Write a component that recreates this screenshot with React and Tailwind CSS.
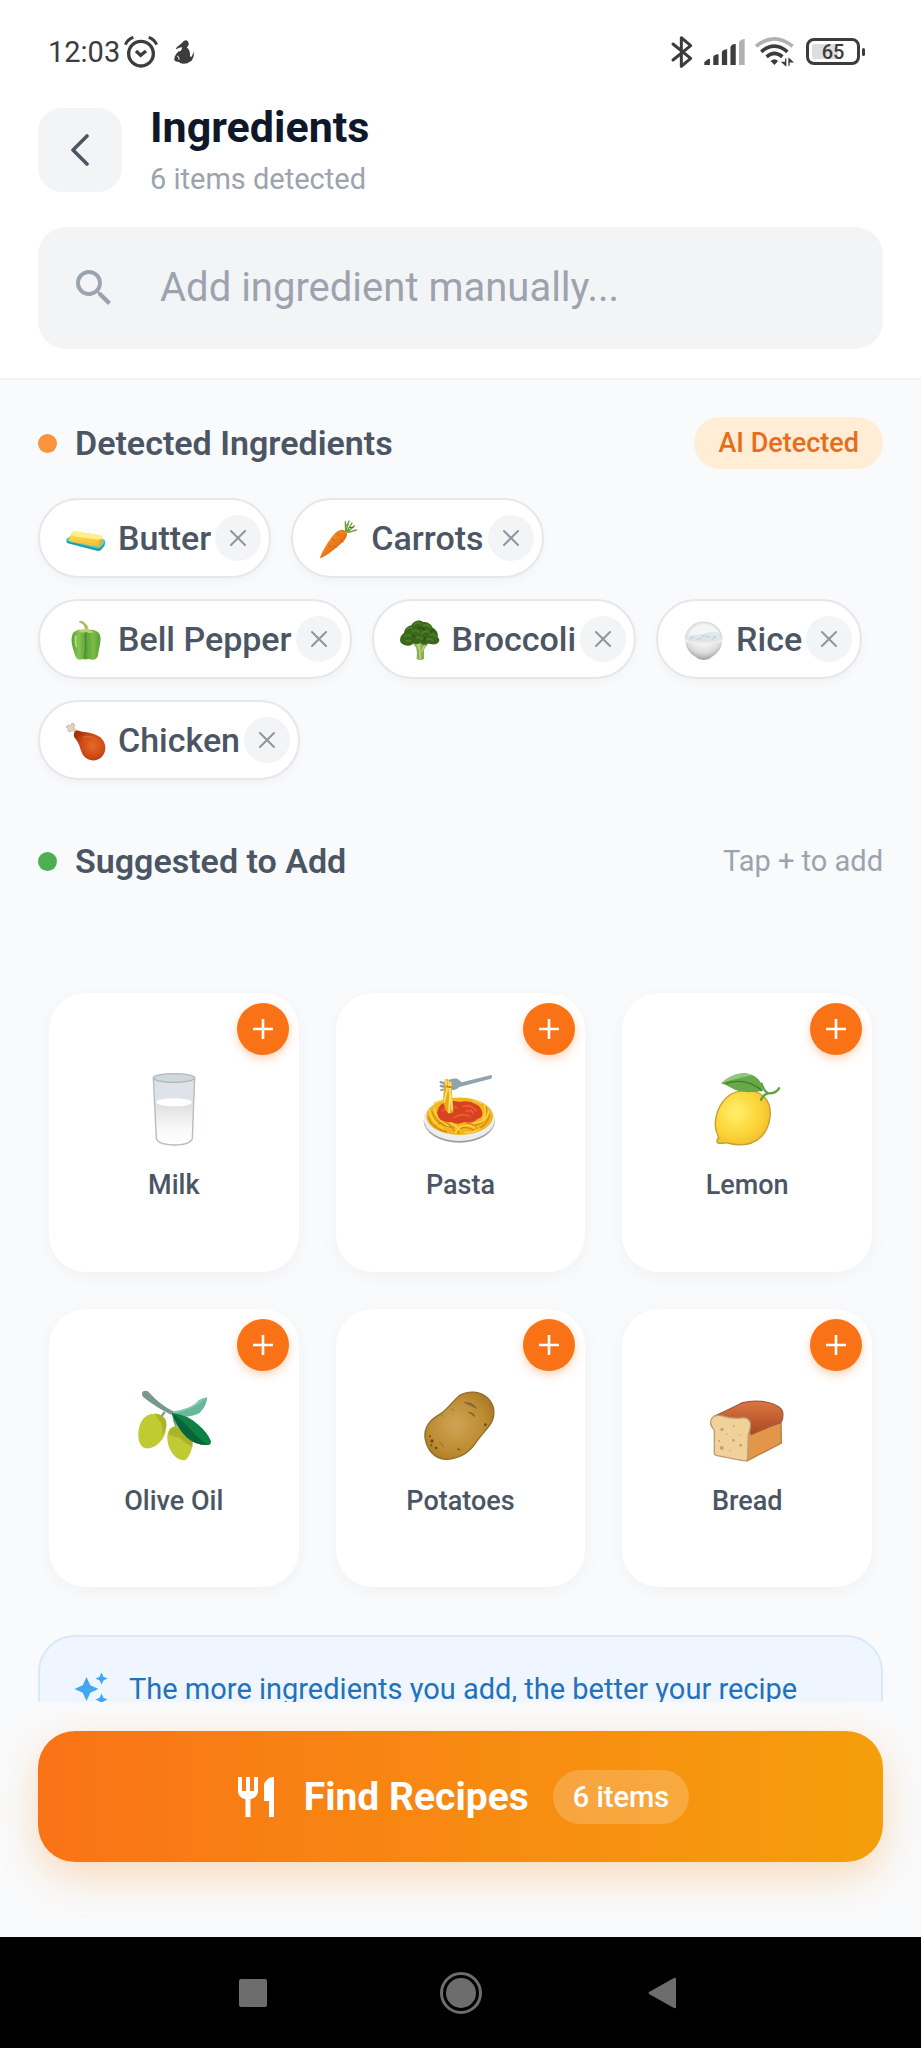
import { useState } from "react";
import { MdSearch, MdAutoAwesome, MdRestaurant } from "react-icons/md";

function Butter() {
  return (
    <svg viewBox="0 0 120 120" className="size-10 shrink-0 overflow-visible" aria-hidden="true">
      <defs>
        <linearGradient id="butterSide" x1="0" y1="0" x2="0" y2="1">
          <stop offset="0" stopColor="#ffe45c" />
          <stop offset="1" stopColor="#f6b92c" />
        </linearGradient>
      </defs>
      <path d="M2 63Q-1 72 5 76L92 98Q99 100 105 96L115 84Q120 76 117 67L100 62L12 56Z" fill="#1f9fa8" />
      <path d="M2 62Q-1 68 5 70L94 91Q100 92 105 88L116 74Q119 67 114 64L20 50Z" fill="#55cfd2" />
      <path d="M9 64L19 43Q21 39 27 40L102 52Q109 54 109 60L108 74Q106 82 97 86L16 71Q8 69 9 64Z" fill="url(#butterSide)" />
      <path d="M19 43Q21 39 27 40L102 52Q109 54 108 60Q106 66 98 65L24 55Q17 53 19 43Z" fill="#fff08a" />
      <path d="M98 65Q106 66 109 60L108 74Q106 82 97 86Z" fill="#eeb02c" />
    </svg>
  );
}

function Carrot() {
  return (
    <svg viewBox="0 0 120 120" className="size-10 shrink-0 overflow-visible" aria-hidden="true">
      <defs>
        <linearGradient id="carrotBody" x1="0" y1="0" x2="1" y2="1">
          <stop offset="0.2" stopColor="#f79329" />
          <stop offset="0.8" stopColor="#e2600f" />
        </linearGradient>
      </defs>
      <g fill="none" stroke="#689f38" strokeWidth="4" strokeLinecap="round" strokeLinejoin="round">
        <path d="M80 40L79 11M81 39L90 9M84 40L99 15M86 42L106 23M88 43L112 36" />
        <path d="M80 24L86 17M92 28L103 29" stroke="#33791d" strokeWidth="3" />
      </g>
      <path d="M3 121C5 108 32 60 50 44C60 33 75 32 82 41C89 51 79 66 64 79C43 97 14 120 3 121Z" fill="url(#carrotBody)" />
      <path d="M54 47L62 54M67 69L73 72M40 63L47 68M45 84L52 88M29 83L35 87" fill="none" stroke="#cf5c12" strokeWidth="3" strokeLinecap="round" />
    </svg>
  );
}

function Pepper() {
  return (
    <svg viewBox="0 0 120 120" className="size-10 shrink-0 overflow-visible" aria-hidden="true">
      <defs>
        <linearGradient id="pepperBody" x1="0" y1="0" x2="1" y2="0">
          <stop offset="0" stopColor="#5aa02c" />
          <stop offset="0.25" stopColor="#86c552" />
          <stop offset="0.5" stopColor="#5aa338" />
          <stop offset="0.75" stopColor="#7cbc48" />
          <stop offset="1" stopColor="#579d30" />
        </linearGradient>
      </defs>
      <path d="M60 36C72 29 94 32 101 46C107 60 101 80 98 96C97 111 93 122 82 122C75 123 70 120 65 120C60 123 53 120 49 121C34 126 29 115 25 101C20 84 13 66 19 47C24 32 46 28 60 36Z" fill="url(#pepperBody)" />
      <path d="M60 41C53 58 64 77 57 102L56 119" fill="none" stroke="#3e8527" strokeWidth="3" />
      <path d="M30 52C26 61 29 72 31 82" fill="none" stroke="#b9df86" strokeWidth="5" strokeLinecap="round" />
      <path d="M38 36Q52 29 56 31Q57 17 42 12Q37 10 40 6Q55 5 65 20L69 33Q80 35 83 40Q70 45 61 38Q48 45 38 36Z" fill="#c2cc72" />
      <path d="M43 7Q57 10 61 28" fill="none" stroke="#91a34a" strokeWidth="3" />
    </svg>
  );
}

function Broccoli() {
  return (
    <svg viewBox="0 0 120 120" className="size-10 shrink-0 overflow-visible" aria-hidden="true">
      <path d="M35 67L49 87Q52 100 50 120Q61 126 72 120L72 92Q76 84 92 66L61 59Z" fill="#8bad51" />
      <path d="M58 73L61 121M50 72L60 96M77 72L65 97" fill="none" stroke="#bad17c" strokeWidth="5" />
      <path d="M4 73C-4 64 2 48 12 42C14 28 25 20 34 19C40 4 60 0 70 9C84 7 95 18 98 26C110 32 116 45 113 54C124 63 115 76 103 76C94 78 86 71 80 75C72 82 64 73 59 71C53 79 43 72 39 74C30 83 15 82 4 73Z" fill="#3a671b" />
      <path d="M19 31Q28 23 35 27M43 15Q52 8 61 14M71 19Q85 15 90 25M14 53Q23 44 32 51M37 38Q49 29 56 39M65 44Q75 31 85 40M91 48Q104 43 107 54M46 57Q57 51 65 60M81 61Q88 56 98 64M18 66L31 65" fill="none" stroke="#4d7d26" strokeWidth="6" strokeLinecap="round" />
      <path d="M36 51Q43 48 45 57M67 28L73 32M76 55L72 66M54 27L64 27M99 34L94 38" fill="none" stroke="#2b5312" strokeWidth="5" strokeLinecap="round" />
    </svg>
  );
}

function Rice() {
  return (
    <svg viewBox="0 0 120 120" className="size-10 shrink-0 overflow-visible" aria-hidden="true">
      <defs>
        <linearGradient id="riceTop" x1="0" y1="0" x2="0" y2="1">
          <stop offset="0" stopColor="#e6e9ea" />
          <stop offset="1" stopColor="#dde5ea" />
        </linearGradient>
        <radialGradient id="riceBowl" cx="0.5" cy="0.35" r="0.62">
          <stop offset="0.4" stopColor="#f6f6f6" />
          <stop offset="0.8" stopColor="#dcdcdc" />
          <stop offset="1" stopColor="#b5b5b5" />
        </radialGradient>
      </defs>
      <path d="M34 111Q38 122 59 123Q80 122 84 111Z" fill="#a2a2a2" />
      <circle cx="59" cy="64" r="55" fill="url(#riceBowl)" />
      <path d="M4 62C4 31 28 9 59 9C90 9 114 31 114 62Q87 73 59 73Q30 73 4 62Z" fill="url(#riceTop)" stroke="#c6c8c9" strokeWidth="2" />
      <path d="M12 50Q28 17 59 15Q86 15 103 40Q77 36 60 45Q35 45 12 50Z" fill="#f4f5f5" />
      <path d="M19 58L29 54M40 61L51 58M67 52L77 55M85 60L95 53M55 51L61 49" stroke="#bdd0dd" strokeWidth="4" strokeLinecap="round" />
      <path d="M2 57Q9 68 59 70Q109 68 116 57Q117 66 110 70Q59 83 8 70Q1 66 2 57Z" fill="#eeeeee" />
    </svg>
  );
}

function Drumstick() {
  return (
    <svg viewBox="0 0 120 120" className="size-10 shrink-0 overflow-visible" aria-hidden="true">
      <defs>
        <radialGradient id="chickenMeat" cx="0.6" cy="0.5" r="0.6">
          <stop offset="0" stopColor="#e6692b" />
          <stop offset="0.6" stopColor="#cf4b16" />
          <stop offset="1" stopColor="#a73109" />
        </radialGradient>
      </defs>
      <path d="M33 40L18 30Q14 38 8 34Q4 31 7 25Q-1 24 3 18Q6 13 14 17Q16 8 22 10Q29 14 23 24L39 36Z" fill="#e2d4bd" stroke="#b2a38c" strokeWidth="2" />
      <path d="M24 41Q26 29 38 32C58 38 83 36 103 52C124 70 121 98 107 111C91 126 67 124 54 109C43 96 43 74 29 57Q21 48 24 41Z" fill="url(#chickenMeat)" />
      <path d="M53 51Q72 46 87 57" stroke="#e8783c" strokeWidth="4" fill="none" strokeLinecap="round" opacity="0.6" />
    </svg>
  );
}

function Milk() {
  return (
    <svg viewBox="0 0 216 216" className="size-18 overflow-visible" aria-hidden="true">
      <defs>
        <linearGradient id="milkFill" x1="0" y1="0" x2="0" y2="1">
          <stop offset="0" stopColor="#dedede" />
          <stop offset="0.6" stopColor="#f8f8f8" />
          <stop offset="1" stopColor="#ffffff" />
        </linearGradient>
      </defs>
      <path d="M46 14L55 197Q60 215 108 216Q156 215 163 197L170 14Z" fill="#dde3e8" />
      <path d="M51 91Q108 108 166 91L162 195Q155 213 108 214Q64 213 57 196Z" fill="url(#milkFill)" />
      <ellipse cx="108" cy="88" rx="54" ry="12" fill="#fff" />
      <path d="M46 14L55 197Q60 215 108 216Q156 215 163 197L170 14" fill="none" stroke="#b5bcc0" strokeWidth="4" />
      <ellipse cx="108" cy="15" rx="62" ry="13" fill="#cfd8df" stroke="#b0b7bb" strokeWidth="4" />
    </svg>
  );
}

function Pasta() {
  return (
    <svg viewBox="0 0 216 216" className="size-18 overflow-visible" aria-hidden="true">
      <ellipse cx="106" cy="143" rx="107" ry="66" fill="#9b9da0" />
      <ellipse cx="106" cy="138" rx="107" ry="66" fill="#eceded" />
      <ellipse cx="107" cy="130" rx="100" ry="56" fill="#f2b51d" />
      <g fill="none" stroke="#d48a0c" strokeWidth="4" strokeLinecap="round">
        <path d="M13 133Q25 168 68 177M24 116Q38 158 89 163M197 125Q188 164 144 174M186 103Q201 145 152 157M36 158Q67 133 91 174M103 181Q108 151 150 171M158 166Q130 138 119 164" />
      </g>
      <g fill="none" stroke="#fdd045" strokeWidth="5" strokeLinecap="round">
        <path d="M17 112Q20 145 56 166M30 102Q34 139 73 158M94 177Q118 144 153 164M194 112Q190 149 148 150M181 98Q187 125 174 143M80 151Q93 155 107 171M124 178Q144 181 167 166M31 90L59 81M148 82L172 90" />
      </g>
      <path d="M39 120Q43 97 59 91Q80 80 106 87Q136 80 153 93Q170 98 174 116Q180 131 161 138Q145 153 121 147Q101 157 82 147Q54 148 44 134Z" fill="#d8431f" />
      <path d="M55 113Q75 94 98 104M117 101Q138 92 156 113M91 133Q113 119 137 130M127 114Q145 109 147 121" fill="none" stroke="#ea5a33" strokeWidth="6" strokeLinecap="round" />
      <path d="M202 6Q207 11 201 17L106 42Q92 56 70 50L49 55L49 49L62 46L47 41L48 35L63 37L46 29L48 23L64 28Q79 14 100 17L113 28Z" fill="#90a4ae" />
      <path d="M62 20Q69 13 82 27L88 117Q75 126 66 113L57 86Z" fill="#eca719" />
      <path d="M65 22L69 50L61 87M73 25L78 66L75 119M80 29L79 57L85 110" fill="none" stroke="#ffe172" strokeWidth="5" strokeLinecap="round" />
      <path d="M65 40L83 43" stroke="#c88413" strokeWidth="5" />
    </svg>
  );
}

function Lemon() {
  return (
    <svg viewBox="0 0 216 216" className="size-18 overflow-visible" aria-hidden="true">
      <defs>
        <radialGradient id="lemonBody" cx="0.38" cy="0.4" r="0.65">
          <stop offset="0" stopColor="#fff06b" />
          <stop offset="0.65" stopColor="#fbd539" />
          <stop offset="1" stopColor="#f3bf2d" />
        </radialGradient>
      </defs>
      <path d="M20 186C6 159 14 117 34 88C62 48 124 41 158 70C190 101 180 162 149 193C122 219 81 218 50 210C35 208 20 217 18 206Q17 198 23 194Z" fill="url(#lemonBody)" stroke="#c89d2c" strokeWidth="4" />
      <path d="M150 80Q158 64 171 61Q195 62 204 46M152 32Q157 52 171 61" fill="none" stroke="#5ba044" strokeWidth="7" strokeLinecap="round" strokeLinejoin="round" />
      <path d="M30 31C62 4 94-7 125 7C147 17 154 34 155 54C108 61 83 58 58 43Q44 35 30 31Z" fill="#67a848" />
      <path d="M30 31C62 4 94-7 125 7C101 11 71 18 30 31Z" fill="#92c77d" />
      <path d="M44 31Q105 12 154 53" stroke="#3c7f31" strokeWidth="4" fill="none" />
    </svg>
  );
}

function Olive() {
  return (
    <svg viewBox="0 0 216 216" className="size-18 overflow-visible" aria-hidden="true">
      <path d="M106 67Q165 58 181 34Q194 26 207 25Q206 51 184 72Q149 90 106 77Z" fill="#82c9aa" />
      <path d="M106 74Q164 65 207 25Q206 51 184 72Q149 90 106 77Z" fill="#68b798" />
      <path d="M12 15Q11 5 24 5Q30 5 37 14Q66 47 108 68L99 77Q52 53 18 26Q11 21 12 15Z" fill="#78988b" />
      <path d="M80 69L66 88M106 76Q107 97 116 115" stroke="#789f8d" strokeWidth="7" fill="none" />
      <path d="M31 78C58 65 91 85 84 120C81 153 51 182 22 178C1 172-3 138 4 113C9 94 20 83 31 78Z" fill="#c0ca33" />
      <path d="M51 73Q81 78 85 99Q88 117 73 140Q78 104 60 91Z" fill="#a9b42b" />
      <path d="M98 118C116 103 150 113 161 143C170 171 155 202 142 213C120 218 98 193 91 168C85 144 88 127 98 118Z" fill="#c0ca33" />
      <path d="M107 113Q151 117 164 151L163 174Q141 164 124 146L92 137Q93 119 107 113Z" fill="#a9b42b" />
      <path d="M101 71Q152 78 181 107Q211 133 219 157Q219 168 211 168Q173 170 146 145Q117 116 101 71Z" fill="#0d8244" />
      <path d="M101 71Q140 99 164 128Q183 151 211 168Q173 170 146 145Q117 116 101 71Z" fill="#08653b" />
    </svg>
  );
}

function Potato() {
  return (
    <svg viewBox="0 0 216 216" className="size-18 overflow-visible" aria-hidden="true">
      <defs>
        <radialGradient id="potatoBody" cx="0.45" cy="0.48" r="0.6">
          <stop offset="0" stopColor="#cda555" />
          <stop offset="0.7" stopColor="#bd8b31" />
          <stop offset="1" stopColor="#a97822" />
        </radialGradient>
      </defs>
      <path d="M106 20C132 4 168 6 190 26C213 48 216 78 199 106C181 130 163 149 152 166C130 196 98 210 65 211C31 210 8 181 3 146C0 114 20 91 47 76C76 58 84 37 106 20Z" fill="url(#potatoBody)" stroke="#8e6c2d" strokeWidth="4" />
      <path d="M121 40Q145 39 158 58L139 49Z M133 70Q149 70 153 83L142 75Z" fill="#8a672b" stroke="#796141" strokeWidth="2" />
      <path d="M48 161L58 173M83 60L88 64M107 186L112 181M53 79L57 82" stroke="#81673c" strokeWidth="3" strokeLinecap="round" />
      <g fill="#6e4819">
        <circle cx="24" cy="156" r="5" />
        <circle cx="18" cy="142" r="3" />
        <circle cx="36" cy="177" r="4" />
        <circle cx="22" cy="169" r="3" />
        <circle cx="184" cy="107" r="4" />
        <circle cx="103" cy="181" r="3" />
      </g>
    </svg>
  );
}

function Bread() {
  return (
    <svg viewBox="0 0 216 216" className="size-18 overflow-visible" aria-hidden="true">
      <defs>
        <linearGradient id="crust" x1="0" y1="0" x2="0" y2="1">
          <stop offset="0" stopColor="#dc7542" />
          <stop offset="1" stopColor="#a94820" />
        </linearGradient>
      </defs>
      <path d="M110 128L210 98L211 162L108 216Z" fill="#e3964a" stroke="#b77d42" strokeWidth="4" />
      <path d="M14 80Q63 57 92 42Q118 34 153 37Q205 45 214 66Q219 88 209 101Q176 112 121 137L99 97Z" fill="url(#crust)" stroke="#a45c3c" strokeWidth="4" />
      <path d="M4 86Q14 75 39 82Q68 91 99 86Q122 90 118 114Q117 127 112 135L110 211Q107 217 91 214L15 199Q8 195 10 187L10 124Q-9 102 4 86Z" fill="#efd199" stroke="#bd9d6f" strokeWidth="4" />
      <g fill="#c8a068">
        <circle cx="33" cy="121" r="5" />
        <circle cx="68" cy="112" r="3" />
        <circle cx="32" cy="177" r="6" />
        <circle cx="67" cy="154" r="4" />
        <circle cx="89" cy="169" r="4" />
        <circle cx="24" cy="155" r="3" />
        <circle cx="87" cy="138" r="2" />
        <circle cx="48" cy="135" r="2" />
        <circle cx="57" cy="185" r="2" />
      </g>
    </svg>
  );
}

const startingIngredients = [
  { name: "Butter", Art: Butter },
  { name: "Carrots", Art: Carrot },
  { name: "Bell Pepper", Art: Pepper },
  { name: "Broccoli", Art: Broccoli },
  { name: "Rice", Art: Rice },
  { name: "Chicken", Art: Drumstick },
];

const suggestions = [
  { name: "Milk", Art: Milk },
  { name: "Pasta", Art: Pasta },
  { name: "Lemon", Art: Lemon },
  { name: "Olive Oil", Art: Olive },
  { name: "Potatoes", Art: Potato },
  { name: "Bread", Art: Bread },
];

function StatusBar() {
  return (
    <div className="flex h-[103px] shrink-0 items-center justify-between pr-14 pl-12 text-[#3c3c3c]">
      <div className="flex items-center">
        <span className="text-[29px] leading-8">12:03</span>
        <svg viewBox="0 0 102 96" className="ml-1 h-8 w-[34px]" fill="none" stroke="currentColor" aria-hidden="true">
          <circle cx="51" cy="53" r="37" strokeWidth="10" />
          <path d="M36 45L50 58L66 45" strokeWidth="10" />
          <path d="M4 26Q11 10 28 4M98 26Q91 10 74 4" strokeWidth="9" />
        </svg>
        <svg viewBox="0 0 60 72" className="ml-4 h-6 w-5" fill="currentColor" aria-hidden="true">
          <path d="M24 9Q29 0 37 1Q45 4 44 13Q43 20 38 22Q49 30 48 47Q50 55 54 48Q58 40 57 34Q62 44 57 54Q54 64 47 65Q42 71 29 71Q18 71 15 66Q4 66 1 61Q0 51 7 41Q13 32 21 32L25 22Q18 21 7 28Q5 24 10 20Z" />
          <path d="M9 48L14 51L15 59" stroke="#fff" strokeWidth="3" fill="none" />
        </svg>
      </div>
      <div className="flex items-center">
        <svg viewBox="0 0 60 96" className="h-8 w-5 overflow-visible" fill="none" stroke="currentColor" strokeWidth="9" strokeLinejoin="round" strokeLinecap="round" aria-hidden="true">
          <path d="M3 24L56 67L28 91V5L56 29L3 72" />
        </svg>
        <svg viewBox="0 0 124 78" className="ml-3 h-[26px] w-[41px]" fill="currentColor" aria-hidden="true">
          <path d="M1 78V69L13 60H18V78ZM28 78V54Q32 45 44 46V78ZM54 78V39Q58 31 70 31V78ZM80 78V24Q84 14 96 15V78Z" />
          <path d="M106 78V10Q110 1 123 0V78Z" fill="#b1b1b1" />
        </svg>
        <svg viewBox="0 0 118 94" className="ml-2.5 h-[31px] w-[39px] overflow-visible" fill="none" stroke="currentColor" strokeWidth="11" aria-hidden="true">
          <path d="M3 31Q58-14 114 31" stroke="#b1b1b1" />
          <path d="M19 48Q58 14 98 48M35 63Q58 43 83 63" />
          <path d="M47 76Q59 65 70 76L59 88Z" fill="currentColor" stroke="none" />
          <path d="M93 68V89L83 80H93M103 90V69L113 78H103" fill="currentColor" strokeWidth="4" />
        </svg>
        <div className="ml-3 flex items-center gap-0.5" role="img" aria-label="Battery 65 percent">
          <span className="flex h-[27px] w-[54px] items-center justify-center rounded-lg border-3 border-current bg-linear-to-r from-[#dedede] from-60% to-white to-60% bg-clip-content p-[3px] text-[20px] leading-5 font-medium">
            65
          </span>
          <span className="h-2 w-[3px] rounded-sm bg-current" />
        </div>
      </div>
    </div>
  );
}

function Chip({ name, Art, onRemove }) {
  return (
    <li className="flex h-20 items-center rounded-full border-2 border-[#e5e7eb] bg-white pr-2 pl-[26px] shadow-[0_4px_10px_rgba(0,0,0,0.03)]">
      <Art />
      <span className="ml-3 text-[34px] leading-10 font-medium text-[#4b5563]">{name}</span>
      <button
        type="button"
        aria-label={`Remove ${name}`}
        onClick={onRemove}
        className="ml-1 flex size-[46px] items-center justify-center rounded-full bg-[#f3f4f6] text-[#8f949f]"
      >
        <svg viewBox="0 0 16 16" className="size-4" stroke="currentColor" strokeWidth="2" strokeLinecap="round" aria-hidden="true">
          <path d="M1 1L15 15M15 1L1 15" />
        </svg>
      </button>
    </li>
  );
}

function SuggestionCard({ name, Art }) {
  return (
    <li className="relative flex aspect-[250/279] flex-col items-center justify-center rounded-[37px] bg-white pt-2.5 shadow-[0_4px_18px_rgba(0,0,0,0.04)]">
      <Art />
      <span className="mt-6 text-[27px] leading-8 font-medium text-[#4b5563]">{name}</span>
      <button
        type="button"
        aria-label={`Add ${name}`}
        className="absolute top-2.5 right-2.5 flex size-13 items-center justify-center rounded-full bg-[#f97316] text-white shadow-[0_4px_10px_rgba(249,115,22,0.3)]"
      >
        <svg viewBox="0 0 20 20" className="size-5" stroke="currentColor" strokeWidth="2.6" aria-hidden="true">
          <path d="M10 0V20M0 10H20" />
        </svg>
      </button>
    </li>
  );
}

export default function App() {
  const [ingredients, setIngredients] = useState(startingIngredients);
  const remove = (name) => setIngredients((list) => list.filter((item) => item.name !== name));

  return (
    <div className="flex h-screen flex-col bg-[#f8fafc] font-[Roboto,sans-serif]">
      <header className="shrink-0 border-b-2 border-[#f1f3f5] bg-white">
        <StatusBar />
        <div className="px-[38px] pb-[29px]">
          <div className="flex items-center gap-7">
            <button type="button" aria-label="Back" className="flex size-21 items-center justify-center rounded-3xl bg-[#f3f4f6] text-[#4b5563]">
              <svg viewBox="0 0 18 32" className="h-8 w-[18px]" fill="none" stroke="currentColor" strokeWidth="3.6" strokeLinecap="round" strokeLinejoin="round" aria-hidden="true">
                <path d="M16 2L2 16L16 30" />
              </svg>
            </button>
            <div>
              <h1 className="text-[43px] leading-12 font-bold text-[#0f172a]">Ingredients</h1>
              <p className="mt-2.5 text-[29px] leading-9 text-[#9ca3af]">{ingredients.length} items detected</p>
            </div>
          </div>
          <label className="mt-[30px] flex h-[122px] items-center gap-[42px] rounded-[28px] bg-[#f3f4f6] px-8">
            <MdSearch className="size-12 shrink-0 text-[#9ca3af]" aria-hidden="true" />
            <input
              type="text"
              aria-label="Add ingredient"
              placeholder="Add ingredient manually..."
              className="min-w-0 flex-1 bg-transparent text-[40px] leading-12 text-[#4b5563] outline-none placeholder:text-[#9ca3af]"
            />
          </label>
        </div>
      </header>

      <main className="min-h-0 flex-1 overflow-y-auto px-[38px] pt-[37px] [scrollbar-width:none]">
        <section>
          <div className="flex items-center gap-[18px]">
            <span className="size-[19px] rounded-full bg-[#fb923c]" />
            <h2 className="flex-1 text-[34px] leading-10 font-semibold text-[#4b5563]">Detected Ingredients</h2>
            <span className="flex h-13 items-center rounded-full bg-[#ffedd5] px-6 text-[27px] leading-8 font-medium text-[#ea6c1a]">AI Detected</span>
          </div>
          <ul className="mt-[29px] flex flex-wrap gap-x-5 gap-y-[21px] pr-3">
            {ingredients.map((item) => (
              <Chip key={item.name} {...item} onRemove={() => remove(item.name)} />
            ))}
          </ul>
        </section>

        <section className="mt-[61px]">
          <div className="flex items-center gap-[18px]">
            <span className="size-[19px] rounded-full bg-[#4caf50]" />
            <h2 className="flex-1 text-[34px] leading-10 font-semibold text-[#4b5563]">Suggested to Add</h2>
            <span className="text-[29px] leading-9 text-[#9ca3af]">Tap + to add</span>
          </div>
          <ul className="mt-28 grid grid-cols-3 gap-[37px] px-[11px]">
            {suggestions.map((item) => (
              <SuggestionCard key={item.name} {...item} />
            ))}
          </ul>
        </section>

        <aside className="mt-12 flex items-start gap-5 rounded-[37px] border-2 border-[#dbe7fb] bg-[#eff6ff] px-[33px] pt-[34px] pb-20">
          <MdAutoAwesome className="size-9 shrink-0 text-[#42a5f5]" aria-hidden="true" />
          <p className="text-[29px] leading-9 text-[#2272bb]">The more ingredients you add, the better your recipe</p>
        </aside>
      </main>

      <footer className="relative shrink-0">
        <div className="overflow-hidden bg-[#f9fafb] px-[38px] pt-[29px] pb-[75px]">
          <button
            type="button"
            className="flex h-[131px] w-full items-center justify-center rounded-[37px] bg-linear-to-r from-[#f97316] to-[#f59e0b] text-white shadow-[0_14px_40px_rgba(249,145,40,0.3)]"
          >
            <MdRestaurant className="size-12" aria-hidden="true" />
            <span className="ml-6 text-[39px] leading-12 font-bold">Find Recipes</span>
            <span className="ml-6 flex h-[54px] items-center rounded-full bg-white/20 px-5 text-[29px] leading-9 font-medium">
              {ingredients.length} items
            </span>
          </button>
        </div>
        <nav aria-label="System" className="flex h-[111px] items-center justify-center gap-[166px] bg-black text-[#6d6d6d]">
          <button type="button" aria-label="Recent apps" className="flex w-[42px] justify-center">
            <span className="size-7 rounded-xs bg-current" />
          </button>
          <button type="button" aria-label="Home" className="flex size-[42px] items-center justify-center rounded-full border-3 border-current">
            <span className="size-[30px] rounded-full bg-current" />
          </button>
          <button type="button" aria-label="Back one screen" className="flex w-[42px] justify-start">
            <svg viewBox="0 0 28 32" className="h-8 w-7" fill="currentColor" aria-hidden="true">
              <path d="M1 15L26 1Q28 0 28 2V30Q28 32 26 31L1 17Q0 16 1 15Z" />
            </svg>
          </button>
        </nav>
      </footer>
    </div>
  );
}
